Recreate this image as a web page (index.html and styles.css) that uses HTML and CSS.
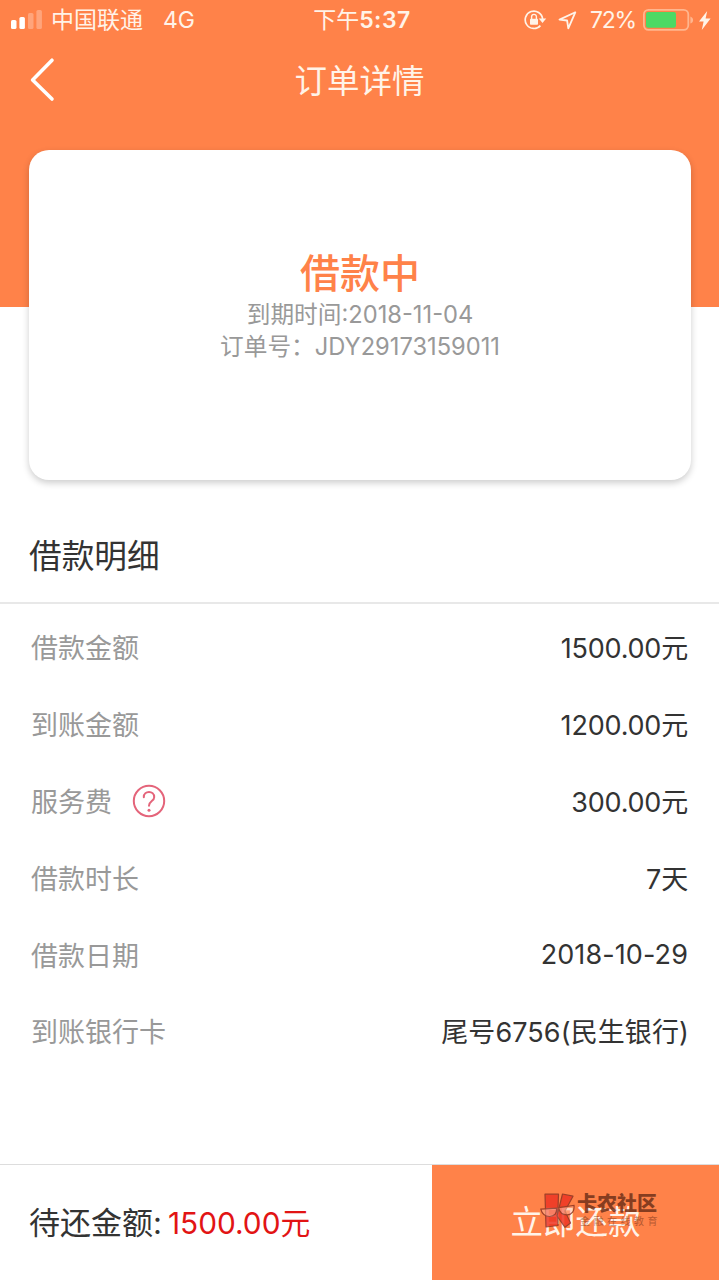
FILE: index.html
```html
<!DOCTYPE html>
<html lang="zh-CN">
<head>
    <meta charset="UTF-8">
    <meta name="viewport" content="width=device-width, initial-scale=1.0">
    <title>订单详情</title>
    <link rel="stylesheet" href="styles.css">
</head>
<body>
    <div class="page">
        <header class="top">
            <div class="status-bar">
                <div class="status-left">
                    <svg class="signal" width="32" height="20" viewBox="0 0 32 20">
                        <rect x="0" y="10" width="5.5" height="9" rx="1.6" fill="#fff"/>
                        <rect x="8.4" y="7" width="5.5" height="12" rx="1.6" fill="#fff"/>
                        <rect x="17" y="3" width="5.5" height="16" rx="1.6" fill="#fff" opacity="0.28"/>
                        <rect x="25.4" y="0" width="5.5" height="19" rx="1.6" fill="#fff" opacity="0.28"/>
                    </svg>
                    <span class="carrier">中国联通</span>
                    <span class="network">4G</span>
                </div>
                <div class="status-time">下午<b>5:37</b></div>
                <div class="status-right">
                    <svg class="lock" width="23" height="20" viewBox="0 0 23 20" fill="none" stroke="#fff3e8">
                        <path d="M16.4 15.6A8.7 8.7 0 1 1 18.6 9" stroke-width="1.7"/>
                        <path d="M14.8 8.6h7.4l-3.7 4.4z" fill="#fff3e8" stroke="none"/>
                        <rect x="6" y="8.7" width="8" height="6" rx="0.8" fill="#fff3e8" stroke="none"/>
                        <path d="M7.6 9V6.8a2.4 2.4 0 0 1 4.8 0V9" stroke-width="1.4"/>
                    </svg>
                    <svg class="location" width="19" height="19" viewBox="0 0 19 19" fill="none" stroke="#fff3e8" stroke-width="1.8" stroke-linejoin="round">
                        <path d="M17.3 1.3L1.5 8.6l7.6.9 1.2 7.8z"/>
                    </svg>
                    <span class="percent">72%</span>
                    <svg class="battery" width="51" height="22" viewBox="0 0 51 22">
                        <rect x="0.9" y="0.9" width="44.4" height="20" rx="4.6" fill="none" stroke="#ffb68f" stroke-width="1.8"/>
                        <rect x="3" y="3" width="30" height="15.8" rx="2.2" fill="#4cd964"/>
                        <path d="M47.4 7.4c3.6 1.4 3.6 5.8 0 7.2z" fill="#ffb68f"/>
                    </svg>
                    <svg class="bolt" width="12" height="19" viewBox="0 0 12 19">
                        <path d="M8.2 0L0 10.6h4.6L2.8 19 11.6 7.6H6.6z" fill="#fff3e8"/>
                    </svg>
                </div>
            </div>
            <nav class="nav-bar">
                <a class="back" href="#">
                    <svg width="28" height="46" viewBox="0 0 28 46" fill="none" stroke="#fff" stroke-width="3.6" stroke-linecap="round" stroke-linejoin="round">
                        <path d="M24 3.2L4.6 23 24 42"/>
                    </svg>
                </a>
                <h1>订单详情</h1>
            </nav>
        </header>

        <section class="card">
            <h2>借款中</h2>
            <p class="due">到期时间:2018-11-04</p>
            <p class="order">订单号：JDY29173159011</p>
        </section>

        <h3 class="detail-title">借款明细</h3>
        <ul class="detail-list">
            <li><span class="label">借款金额</span><span class="value">1500.00元</span></li>
            <li><span class="label">到账金额</span><span class="value">1200.00元</span></li>
            <li>
                <span class="label">服务费</span>
                <svg class="help" width="34" height="34" viewBox="0 0 34 34" fill="none" stroke="#e4647a">
                    <circle cx="17" cy="17" r="15.2" stroke-width="2"/>
                    <path d="M11.8 13.2c0-6.8 10.4-6.8 10.4 0 0 4-5.2 3.8-5.2 8.6" stroke-width="2" stroke-linecap="round"/>
                    <circle cx="17" cy="26.2" r="1.5" fill="#e4647a" stroke="none"/>
                </svg>
                <span class="value">300.00元</span>
            </li>
            <li><span class="label">借款时长</span><span class="value">7天</span></li>
            <li><span class="label">借款日期</span><span class="value date">2018-10-29</span></li>
            <li><span class="label">到账银行卡</span><span class="value bank">尾号6756(民生银行)</span></li>
        </ul>

        <footer class="pay-bar">
            <div class="total">待还金额:<span class="amount">1500.00元</span></div>
            <a class="pay-btn" href="#">立即还款
                <div class="watermark">
                    <svg width="35" height="36" viewBox="0 0 35 36">
                        <g fill="#ee3524" stroke="#8d3423" stroke-width="1.2" stroke-linejoin="round">
                            <path d="M5 1.2h13.500L18 15.500v17L6 34z"/>
                            <path d="M22.500 1L33 3.200 25 18l5.500 12-5.500 4.300L17 23z"/>
                        </g>
                        <g fill="#ffb9a0" fill-opacity="0.55" stroke="#8d3423" stroke-width="1.2">
                            <path d="M.8 16.2l15.700-1c.8 5-2 8.300-7 8.300-4.400 0-7.500-2.600-8.700-7.300z"/>
                            <path d="M18.500 14.600L34 12.500c.6 5.600-2 9-6.500 9.300-4.500.2-8-2.500-9-7.200z"/>
                        </g>
                    </svg>
                    <div class="watermark-text">
                        <strong>卡农社区</strong>
                        <small>金融在线教育</small>
                    </div>
                </div>
            </a>
        </footer>
    </div>
</body>
</html>
```
FILE: styles.css
```css
/* General Styles */
* {
    box-sizing: border-box;
}

body {
    margin: 0;
    font-family: Inter, "Noto Sans CJK SC", sans-serif;
    color: #333;
    background-color: #fff;
}

h1, h2, h3, p, ul {
    margin: 0;
    padding: 0;
    font-weight: normal;
}

a {
    color: inherit;
    text-decoration: none;
}

svg {
    display: block;
    flex: none;
}

.page {
    width: 719px;
    height: 1280px;
    display: flex;
    flex-direction: column;
    overflow: hidden;
}

/* Header */
.top {
    height: 307px;
    flex: none;
    background-color: #ff8249;
    color: #fff3e8;
}

.status-bar {
    height: 40px;
    display: grid;
    grid-template-columns: 1fr auto 1fr;
    align-items: center;
    padding: 0 8px 0 11px;
    font-size: 23px;
    line-height: 40px;
    white-space: nowrap;
}

.status-left,
.status-right {
    display: flex;
    align-items: center;
}

.status-right {
    justify-content: flex-end;
}

.carrier {
    margin-left: 8px;
}

.network {
    margin-left: 20px;
}

.status-time {
    padding-left: 2px;
}

.status-time b {
    font-weight: 600;
    letter-spacing: 0.5px;
}

.location {
    margin: 0 13px 0 11px;
}

.percent {
    letter-spacing: -1.2px;
}

.battery {
    margin: 0 5px 0 7px;
}

.nav-bar {
    height: 80px;
    display: grid;
    grid-template-columns: 100px 1fr 100px;
    align-items: center;
}

.back {
    padding-left: 28px;
}

.nav-bar h1 {
    padding-top: 4px;
    font-size: 32.5px;
    line-height: 76px;
    text-align: center;
}

/* Card */
.card {
    flex: none;
    width: 662px;
    height: 330px;
    margin: -157px 0 0 29px;
    padding-top: 99px;
    border-radius: 20px;
    background-color: #fff;
    box-shadow: 0 3px 7px rgba(0, 0, 0, 0.2);
    text-align: center;
    color: #999;
    font-size: 23.7px;
}

.card h2 {
    font-size: 40px;
    line-height: 50px;
    font-weight: 500;
    color: #ff8249;
}

.card p {
    line-height: 32px;
}

/* Loan details */
.detail-title {
    flex: none;
    height: 124px;
    padding: 28px 0 0 29px;
    border-bottom: 2px solid #e8e8e8;
    font-size: 32.7px;
    line-height: 96px;
}

.detail-list {
    list-style: none;
    padding: 4.6px 31px 0;
    font-size: 27px;
}

.detail-list li {
    display: flex;
    align-items: center;
    height: 76.8px;
}

.label {
    color: #999;
}

.value {
    margin-left: auto;
    letter-spacing: -0.2px;
}

.date {
    letter-spacing: 0.1px;
    padding-top: 1px;
}

.bank {
    margin-right: -1px;
    letter-spacing: 0.1px;
}

.help {
    margin-left: 20px;
}

/* Bottom bar */
.pay-bar {
    flex: none;
    height: 116px;
    margin-top: auto;
    display: flex;
    border-top: 1px solid #ddd;
    line-height: 115px;
}

.total {
    width: 432px;
    padding-left: 29px;
    font-size: 31px;
    white-space: nowrap;
}

.amount {
    margin-left: 6px;
    font-size: 29.8px;
    color: #e21414;
}

.pay-btn {
    position: relative;
    flex: 1;
    background-color: #ff8249;
    color: #fff3e8;
    font-size: 32.5px;
    text-align: center;
}

/* Community mark over the button */
.watermark {
    position: absolute;
    left: 108px;
    top: 28px;
    display: flex;
    gap: 2px;
    opacity: 0.85;
    line-height: 1;
    text-align: left;
}

.watermark-text {
    display: flex;
    flex-direction: column;
    padding-top: 1px;
    color: #72311a;
    white-space: nowrap;
}

.watermark strong {
    font-size: 20px;
    line-height: 21px;
    font-weight: 900;
}

.watermark small {
    padding-left: 3px;
    font-size: 10px;
    line-height: 13px;
    letter-spacing: 3.5px;
    opacity: 0.6;
}
```
